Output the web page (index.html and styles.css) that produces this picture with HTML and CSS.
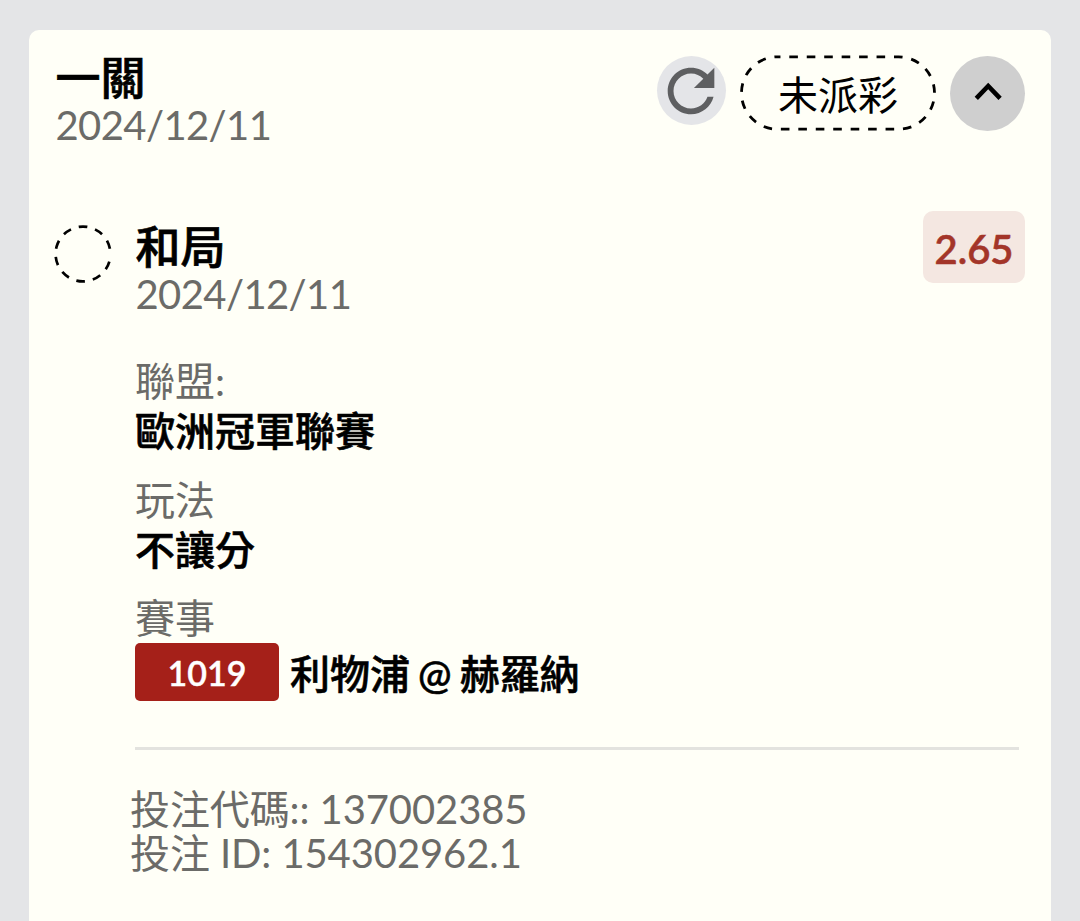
FILE: index.html
```html
<!DOCTYPE html>
<html lang="zh-Hant">
<head>
    <meta charset="UTF-8">
    <meta name="viewport" content="width=device-width, initial-scale=1.0">
    <title>投注紀錄</title>
    <link rel="stylesheet" href="styles.css">
</head>
<body>
    <div class="card">
        <div class="card-header">
            <div class="heading">
                <div class="title">一關</div>
                <div class="date">2024/12/11</div>
            </div>
            <div class="actions">
                <button class="refresh" aria-label="refresh">
                    <svg width="70" height="70" viewBox="0 0 24 24">
                        <path d="M17.65 6.35C16.2 4.9 14.21 4 12 4c-4.42 0-7.99 3.58-7.99 8s3.57 8 7.99 8c3.73 0 6.84-2.55 7.73-6h-2.08c-.82 2.33-3.04 4-5.65 4-3.31 0-6-2.69-6-6s2.69-6 6-6c1.66 0 3.14.69 4.22 1.78L13 11h7V4l-2.35 2.35z" fill="#5e5f61"/>
                    </svg>
                </button>
                <div class="status">
                    <svg class="status-outline" width="196" height="76" viewBox="0 0 196 76">
                        <rect x="1.5" y="1.8" width="193" height="72.4" rx="36" fill="none" stroke="#000" stroke-width="2.8" stroke-dasharray="8.6 8.85" stroke-dashoffset="-11.8"/>
                    </svg>
                    <span class="status-text">未派彩</span>
                </div>
                <button class="toggle" aria-label="collapse">
                    <svg width="75" height="75" viewBox="0 0 75 75">
                        <path d="M26.3 42.3 38.2 30 50.1 42.3" fill="none" stroke="#000" stroke-width="4.6"/>
                    </svg>
                </button>
            </div>
        </div>

        <div class="bet">
            <svg class="bet-state" width="58" height="58" viewBox="0 0 58 58">
                <circle cx="29" cy="29" r="27.4" fill="none" stroke="#000" stroke-width="2.7" pathLength="360" transform="rotate(16 29 29)" stroke-dasharray="18 17 18 17 18 17 18 17 18 17 18 17 18 17 18 17 18 17 18 27"/>
            </svg>
            <div class="bet-body">
                <div class="bet-top">
                    <div class="heading">
                        <div class="title">和局</div>
                        <div class="date">2024/12/11</div>
                    </div>
                    <div class="odds">2.65</div>
                </div>

                <div class="details">
                    <div class="field">
                        <div class="label">聯盟:</div>
                        <div class="value">歐洲冠軍聯賽</div>
                    </div>
                    <div class="field">
                        <div class="label">玩法</div>
                        <div class="value">不讓分</div>
                    </div>
                    <div class="field">
                        <div class="label">賽事</div>
                        <div class="match">
                            <span class="match-code">1019</span>
                            <span class="value match-teams">利物浦 @ 赫羅納</span>
                        </div>
                    </div>
                </div>

                <div class="ids">
                    <div>投注代碼:: 137002385</div>
                    <div>投注 ID: 154302962.1</div>
                </div>
            </div>
        </div>
    </div>
</body>
</html>
```

FILE: styles.css
```css
body {
    margin: 0;
    padding: 30px 29px 0;
    box-sizing: border-box;
    height: 921px;
    overflow: hidden;
    background-color: #e4e5e7;
    color: #000;
    font-family: Lato, "Noto Sans CJK TC", sans-serif;
    font-size: 40px;
}

.card {
    box-sizing: border-box;
    height: 920px;
    padding: 25px 26px 0;
    border-radius: 10px;
    background-color: #fffff7;
}

.card-header {
    display: flex;
    justify-content: space-between;
    align-items: flex-start;
}

.title {
    font-size: 45px;
    font-weight: 500;
    line-height: 46px;
    -webkit-text-stroke: 0.7px #000;
}

.date {
    color: #6b6b68;
    line-height: 48px;
    letter-spacing: -0.6px;
}

/* Buttons at the right of the header */
.actions {
    display: flex;
    align-items: flex-start;
}

.refresh,
.toggle {
    display: flex;
    justify-content: center;
    align-items: center;
    padding: 0;
    border: none;
    border-radius: 50%;
}

.refresh {
    width: 69px;
    height: 69px;
    margin: 1px 14px 0 0;
    background-color: #e4e5e8;
}

.refresh svg {
    flex-shrink: 0;
    margin-left: -1px;
}

.toggle {
    width: 75px;
    height: 75px;
    margin: 1px 0 0 14px;
    background-color: #cfcfcf;
}

.status {
    position: relative;
    width: 196px;
    height: 76px;
    line-height: 80px;
    text-align: center;
}

.status-outline {
    position: absolute;
    top: 0;
    left: 0;
}

/* Single bet */
.bet {
    display: flex;
    align-items: flex-start;
    margin-top: 75px;
}

.bet-state {
    flex-shrink: 0;
    margin: 1px 23px 0 -1px;
}

.bet-body {
    flex: 1;
}

.bet-top {
    display: flex;
    justify-content: space-between;
    align-items: flex-start;
}

.heading {
    padding-left: 0.5px;
}

.odds {
    width: 102px;
    height: 72px;
    margin-top: -13px;
    border-radius: 10px;
    background-color: #f4e7e1;
    color: #a33529;
    font-weight: 600;
    line-height: 76px;
    text-align: center;
    -webkit-text-stroke: 0.5px #a33529;
}

.details {
    margin-right: 6px;
    padding: 39px 0 46px;
    border-bottom: 3px solid #e3e3df;
}

.field {
    margin-bottom: 19.5px;
}

.field:last-child {
    margin-bottom: 0;
}

.label {
    color: #6b6b68;
    line-height: 49px;
}

.value {
    font-weight: 500;
    line-height: 50px;
    -webkit-text-stroke: 0.6px #000;
}

.match {
    display: flex;
    align-items: center;
    gap: 11px;
}

.match-code {
    width: 144px;
    height: 58px;
    border-radius: 5px;
    background-color: #a52019;
    color: #fff;
    font-size: 34px;
    font-weight: 600;
    line-height: 60px;
    text-align: center;
    -webkit-text-stroke: 0.4px #fff;
}

.match-teams {
    padding-top: 3px;
    word-spacing: -2px;
}

.ids {
    margin: 37px 0 0 -5px;
    color: #6b6b68;
    line-height: 44px;
    letter-spacing: -0.1px;
}
```
